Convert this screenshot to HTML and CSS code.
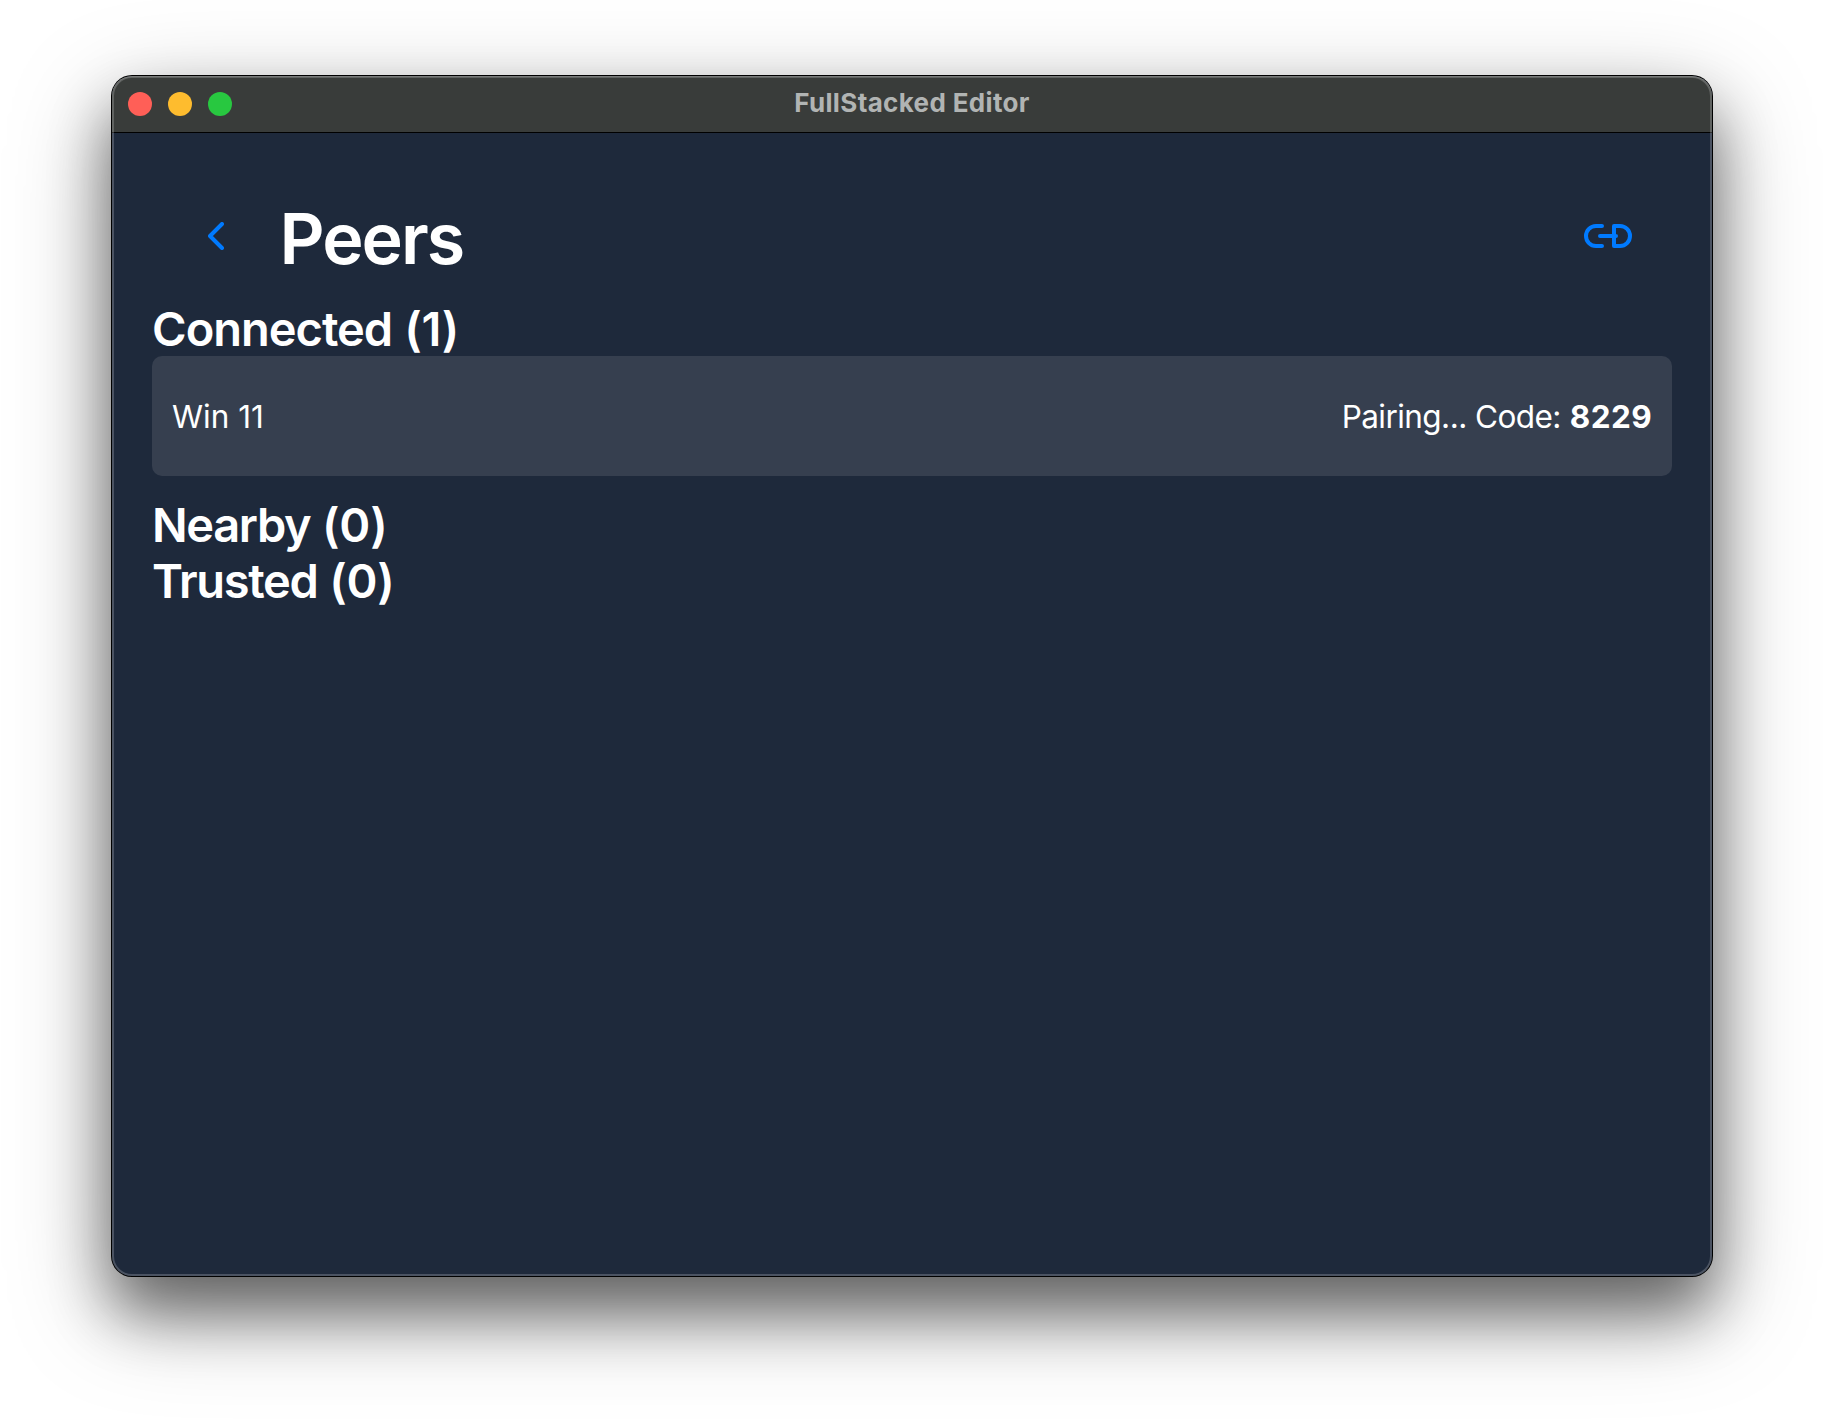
FILE: index.html
```html
<!DOCTYPE html>
<html lang="en">
<head>
<meta charset="utf-8">
<title>FullStacked Editor</title>
<link rel="stylesheet" href="styles.css">
</head>
<body>
<div class="window">
  <header class="titlebar">
    <div class="controls">
      <span class="dot close"></span>
      <span class="dot minimize"></span>
      <span class="dot maximize"></span>
    </div>
    <span class="window-title">FullStacked Editor</span>
  </header>
  <main class="content">
    <div class="topbar">
      <button class="icon-button back" aria-label="Back">
        <svg width="16" height="28" viewBox="0 0 16 28"><path d="M14 2L2 14L14 26"/></svg>
      </button>
      <h1 class="page-title">Peers</h1>
      <button class="icon-button link" aria-label="Connect">
        <svg width="48" height="24" viewBox="0 0 48 24"><path d="M18 2H12A10 10 0 0 0 12 22H18M16 12H32M30 2H36A10 10 0 0 1 36 22H30Z"/></svg>
      </button>
    </div>
    <section class="group">
      <h2 class="heading connected">Connected <span class="count">(1)</span></h2>
      <div class="peer">
        <span class="peer-name">Win 11</span>
        <span class="pairing"><span class="pairing-label">Pairing... Code:</span> <strong class="code">8229</strong></span>
      </div>
    </section>
    <h2 class="heading nearby">Nearby <span class="count">(0)</span></h2>
    <h2 class="heading trusted">Trusted <span class="count">(0)</span></h2>
  </main>
</div>
</body>
</html>
```
FILE: styles.css
```css
* { box-sizing: border-box; }
body {
  margin: 0;
  height: 1424px;
  padding: 76px 112px 148px;
  background: #fff;
  color: #fff;
  font-family: Inter, "Liberation Sans", sans-serif;
  font-feature-settings: "calt" 0;
  overflow: hidden;
}
.window {
  position: relative;
  height: 1200px;
  border-radius: 20px;
  background: #1e293b;
  box-shadow: 0 0 0 1px #000, 0 36px 60px rgba(0, 0, 0, .46), 0 32px 100px rgba(0, 0, 0, .34);
}
/* light rim drawn over the window edge */
.window::after {
  content: "";
  position: absolute;
  inset: 0;
  border-radius: 20px;
  box-shadow: inset 0 0 0 2px rgba(255, 255, 255, .2), inset 0 1px 0 0 rgba(255, 255, 255, .16);
  pointer-events: none;
}
.titlebar {
  display: grid;
  grid-template-columns: 1fr auto 1fr;
  align-items: center;
  height: 57px;
  padding: 0 16px;
  border-radius: 20px 20px 0 0;
  border-bottom: 1px solid #000;
  background: #393c3a;
}
.controls { display: flex; gap: 16px; }
.dot { width: 24px; height: 24px; border-radius: 50%; }
.close { background: #ff5f57; }
.minimize { background: #febc2e; }
.maximize { background: #28c840; }
.window-title {
  color: #b1b4b3;
  font-size: 26px;
  font-weight: 700;
  line-height: 32px;
  letter-spacing: .35px;
  padding-bottom: 3px;
}
.content { padding: 63px 40px 0; }
.topbar {
  display: flex;
  align-items: center;
  height: 104px;
  padding: 0 40px 0 56px;
}
.icon-button {
  display: flex;
  border: 0;
  padding: 0;
  background: none;
  margin-bottom: 24px;
}
.icon-button svg {
  fill: none;
  stroke: #007aff;
  stroke-width: 4;
  stroke-linecap: round;
  stroke-linejoin: round;
}
.page-title {
  margin: 0 auto 0 55.5px;
  font-size: 70px;
  font-weight: 600;
  line-height: 84px;
  letter-spacing: -2px;
  padding-bottom: 18px;
}
.heading {
  margin: 0;
  padding-top: 1px;
  height: 56px;
  font-size: 47px;
  font-weight: 600;
  line-height: 56px;
  letter-spacing: -1.35px;
  word-spacing: 1.2px;
  white-space: nowrap;
}
.connected { letter-spacing: -1px; }
.count { letter-spacing: -.2px; }
.peer {
  display: flex;
  align-items: center;
  justify-content: space-between;
  height: 120px;
  margin-bottom: 20px;
  padding: 0 20px;
  border-radius: 10px;
  background: #363f4f;
  font-size: 31.5px;
}
.pairing-label { letter-spacing: -.55px; }
.code { font-weight: 700; letter-spacing: .4px; }
```
